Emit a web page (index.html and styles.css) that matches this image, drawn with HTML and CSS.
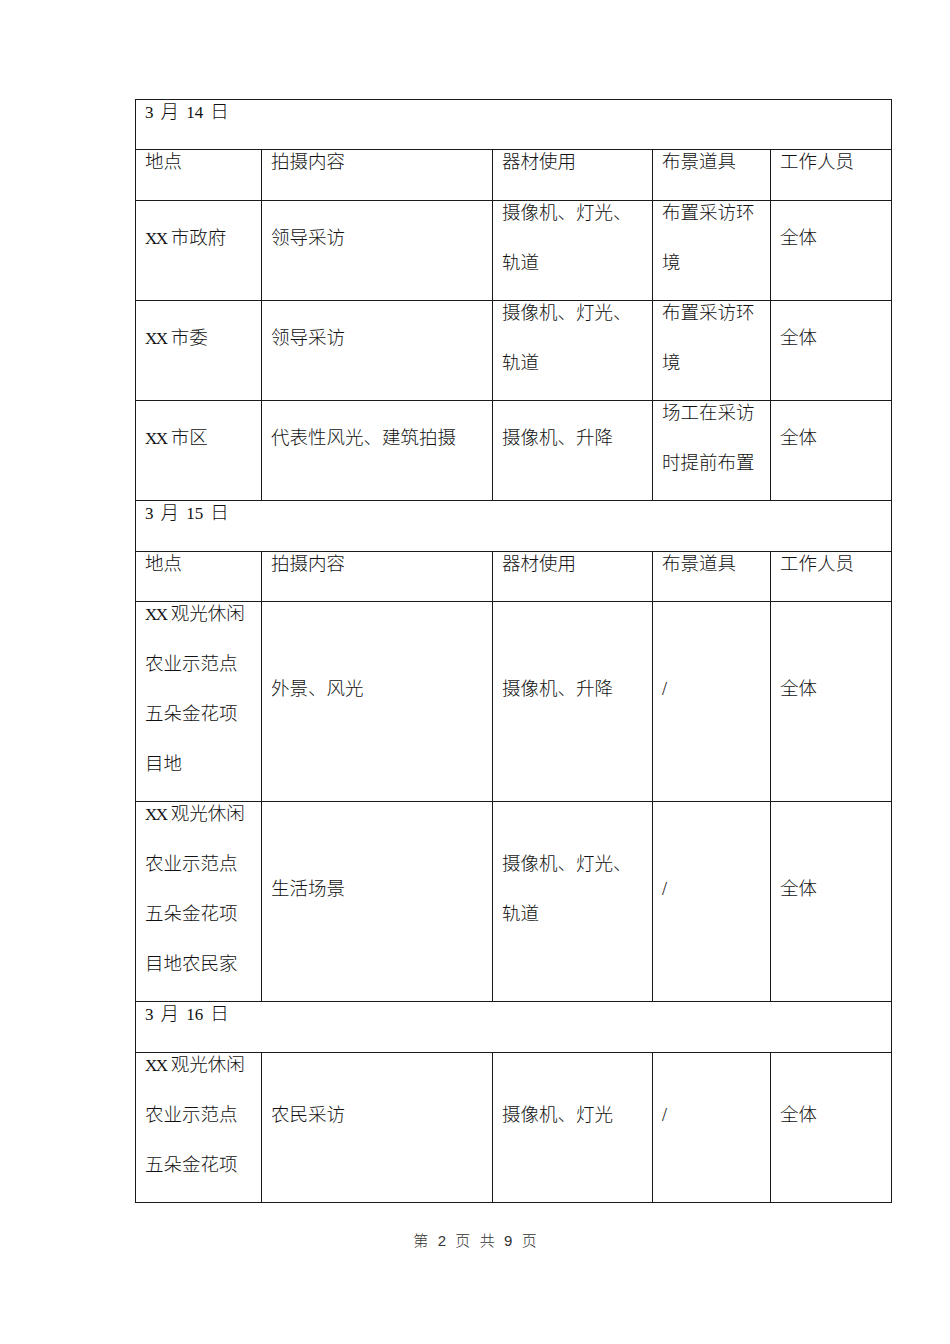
FILE: index.html
```html
<!DOCTYPE html>
<html lang="zh-CN">
<head>
<meta charset="utf-8">
<title>拍摄计划</title>
<link rel="stylesheet" href="styles.css">
</head>
<body>
<div class="page">
  <table class="plan">
    <colgroup>
      <col class="c1"><col class="c2"><col class="c3"><col class="c4"><col class="c5">
    </colgroup>
    <tbody>
      <tr class="date"><td colspan="5"><span class="ln"><span class="num">3</span> 月 <span class="num">14</span> 日</span></td></tr>
      <tr><td><span class="ln">地点</span></td><td><span class="ln">拍摄内容</span></td><td><span class="ln">器材使用</span></td><td><span class="ln">布景道具</span></td><td><span class="ln">工作人员</span></td></tr>
      <tr>
        <td><span class="ln"><span class="lat">XX</span> 市政府</span></td>
        <td><span class="ln">领导采访</span></td>
        <td><span class="ln">摄像机、灯光、</span><span class="ln">轨道</span></td>
        <td><span class="ln">布置采访环</span><span class="ln">境</span></td>
        <td><span class="ln">全体</span></td>
      </tr>
      <tr>
        <td><span class="ln"><span class="lat">XX</span> 市委</span></td>
        <td><span class="ln">领导采访</span></td>
        <td><span class="ln">摄像机、灯光、</span><span class="ln">轨道</span></td>
        <td><span class="ln">布置采访环</span><span class="ln">境</span></td>
        <td><span class="ln">全体</span></td>
      </tr>
      <tr>
        <td><span class="ln"><span class="lat">XX</span> 市区</span></td>
        <td><span class="ln">代表性风光、建筑拍摄</span></td>
        <td><span class="ln">摄像机、升降</span></td>
        <td><span class="ln">场工在采访</span><span class="ln">时提前布置</span></td>
        <td><span class="ln">全体</span></td>
      </tr>
      <tr class="date"><td colspan="5"><span class="ln"><span class="num">3</span> 月 <span class="num">15</span> 日</span></td></tr>
      <tr><td><span class="ln">地点</span></td><td><span class="ln">拍摄内容</span></td><td><span class="ln">器材使用</span></td><td><span class="ln">布景道具</span></td><td><span class="ln">工作人员</span></td></tr>
      <tr>
        <td><span class="ln"><span class="lat">XX</span> 观光休闲</span><span class="ln">农业示范点</span><span class="ln">五朵金花项</span><span class="ln">目地</span></td>
        <td><span class="ln">外景、风光</span></td>
        <td><span class="ln">摄像机、升降</span></td>
        <td><span class="ln"><span class="slash">/</span></span></td>
        <td><span class="ln">全体</span></td>
      </tr>
      <tr>
        <td><span class="ln"><span class="lat">XX</span> 观光休闲</span><span class="ln">农业示范点</span><span class="ln">五朵金花项</span><span class="ln">目地农民家</span></td>
        <td><span class="ln">生活场景</span></td>
        <td><span class="ln">摄像机、灯光、</span><span class="ln">轨道</span></td>
        <td><span class="ln"><span class="slash">/</span></span></td>
        <td><span class="ln">全体</span></td>
      </tr>
      <tr class="date"><td colspan="5"><span class="ln"><span class="num">3</span> 月 <span class="num">16</span> 日</span></td></tr>
      <tr>
        <td><span class="ln"><span class="lat">XX</span> 观光休闲</span><span class="ln">农业示范点</span><span class="ln">五朵金花项</span></td>
        <td><span class="ln">农民采访</span></td>
        <td><span class="ln">摄像机、灯光</span></td>
        <td><span class="ln"><span class="slash">/</span></span></td>
        <td><span class="ln">全体</span></td>
      </tr>
    </tbody>
  </table>
  <div class="footer">第 <span class="fnum">2</span> 页 共 <span class="fnum">9</span> 页</div>
</div>
</body>
</html>
```

FILE: styles.css
```css
html, body {
  margin: 0;
  padding: 0;
  background: #ffffff;
}

body {
  font-family: "Noto Sans CJK SC", "Noto Sans", sans-serif;
  color: #111111;
}

.page {
  width: 950px;
  padding-top: 99px;
}

.plan {
  margin-left: 135px;
  width: 757px;
  border-collapse: collapse;
  table-layout: fixed;
  font-size: 18.5px;
}

.c1 { width: 126px; }
.c2 { width: 231px; }
.c3 { width: 160px; }
.c4 { width: 118px; }
.c5 { width: 121px; }

.plan td {
  border: 1px solid #1a1a1a;
  padding: 0 9px;
  vertical-align: middle;
  white-space: nowrap;
}

.ln {
  display: block;
  height: 50px;
  line-height: 21px;
  font-weight: 300;
}

.ln:last-child {
  height: 49.27px;
}

.lat {
  font-family: "Liberation Serif", serif;
  font-weight: 400;
  font-size: 17px;
  letter-spacing: -1.5px;
}

.num {
  font-family: "Liberation Serif", serif;
  font-weight: 400;
  font-size: 17px;
}

.date .ln {
  word-spacing: 3px;
}

.slash {
  font-family: "Liberation Serif", serif;
  font-weight: 400;
  font-size: 18px;
}

.footer {
  margin-top: 26px;
  width: 950px;
  text-align: center;
  font-size: 15px;
  color: #333333;
  word-spacing: 6px;
  font-weight: 300;
}

.fnum {
  font-family: "Liberation Sans", sans-serif;
  font-weight: 400;
}
```
